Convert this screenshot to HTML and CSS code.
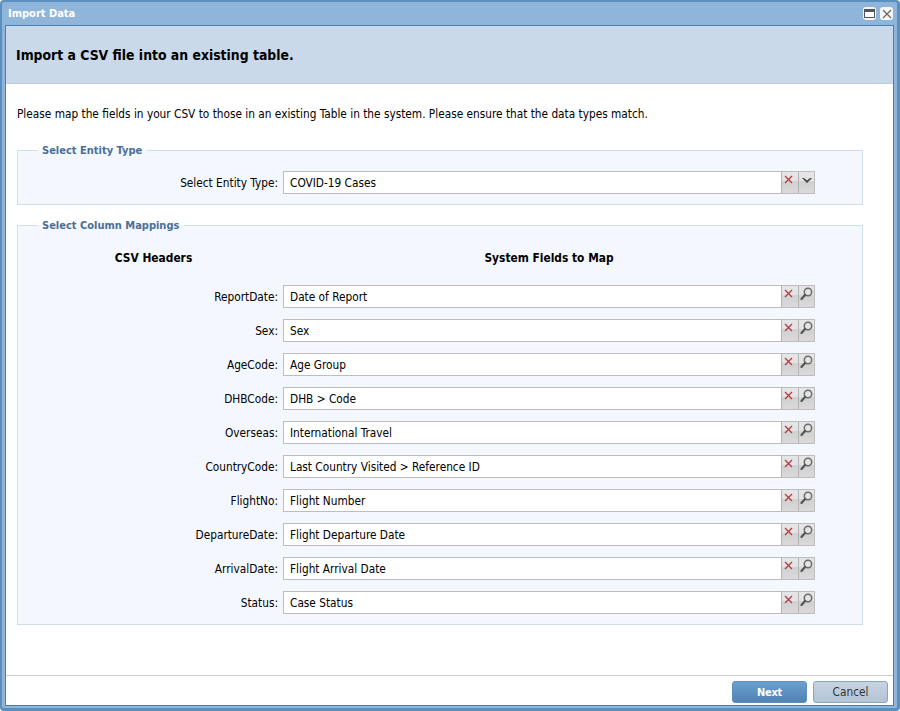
FILE: index.html
```html
<!DOCTYPE html>
<html lang="en">
<head>
<meta charset="utf-8">
<title>Import Data</title>
<link rel="stylesheet" href="styles.css">
</head>
<body>
<div class="window">
  <div class="titlebar">
    <span class="title">Import Data</span>
    <div class="tools">
      <button class="tool"><svg width="11" height="9" viewBox="0 0 11 9"><rect x="0.5" y="0.5" width="10" height="8" fill="#fff" stroke="#555"/><rect x="1" y="1" width="9" height="2" fill="#555"/></svg></button>
      <button class="tool"><svg width="10" height="10" viewBox="0 0 10 10"><path d="M1 1L9 9M9 1L1 9" stroke="#666" stroke-width="1.2" fill="none"/></svg></button>
    </div>
  </div>
  <div class="panel">
    <div class="banner">Import a CSV file into an existing table.</div>
    <div class="content">
      <p class="intro">Please map the fields in your CSV to those in an existing Table in the system. Please ensure that the data types match.</p>
      <fieldset class="group group-entity">
        <legend>Select Entity Type</legend>
        <div class="row">
          <label class="lbl">Select Entity Type:</label>
          <div class="combo">
            <div class="value">COVID-19 Cases</div>
            <span class="trig trig-clear"><svg width="9" height="9" viewBox="0 0 9 9"><path d="M1 1L8 8M8 1L1 8" stroke="#b93a40" stroke-width="1.3" fill="none"/></svg></span>
            <span class="trig trig-down"><svg width="10" height="7" viewBox="0 0 10 7"><path d="M0 1L5 6L10 1L8 1L5 3.5L2 1Z" fill="#444"/></svg></span>
          </div>
        </div>
      </fieldset>
      <fieldset class="group group-map">
        <legend>Select Column Mappings</legend>
        <div class="heads">
          <div class="head-a">CSV Headers</div>
          <div class="head-b">System Fields to Map</div>
        </div>
        <div class="rows" id="rows"></div>
      </fieldset>
    </div>
    <div class="footer">
      <button class="btn btn-next">Next</button>
      <button class="btn btn-cancel">Cancel</button>
    </div>
  </div>
</div>
<script src="app.js"></script>
</body>
</html>
```
FILE: app.js
```js
var data = [
  ["ReportDate:", "Date of Report"],
  ["Sex:", "Sex"],
  ["AgeCode:", "Age Group"],
  ["DHBCode:", "DHB > Code"],
  ["Overseas:", "International Travel"],
  ["CountryCode:", "Last Country Visited > Reference ID"],
  ["FlightNo:", "Flight Number"],
  ["DepartureDate:", "Flight Departure Date"],
  ["ArrivalDate:", "Flight Arrival Date"],
  ["Status:", "Case Status"]
];
var x = '<svg width="9" height="9" viewBox="0 0 9 9"><path d="M1 1L8 8M8 1L1 8" stroke="#b93a40" stroke-width="1.3" fill="none"/></svg>';
var s = '<svg width="13" height="14" viewBox="0 0 13 14"><circle cx="8" cy="5" r="3.7" fill="#e4e4e4" stroke="#6a6a6a" stroke-width="1.5"/><path d="M5 8L1.5 12" stroke="#555" stroke-width="2.2" stroke-linecap="round"/></svg>';
var root = document.getElementById("rows");
data.forEach(function (d) {
  var row = document.createElement("div");
  row.className = "row";
  var lbl = document.createElement("label");
  lbl.className = "lbl";
  lbl.textContent = d[0];
  var combo = document.createElement("div");
  combo.className = "combo";
  var val = document.createElement("div");
  val.className = "value";
  val.textContent = d[1];
  combo.appendChild(val);
  [[x, "trig trig-clear"], [s, "trig"]].forEach(function (ic) {
    var t = document.createElement("span");
    t.className = ic[1];
    t.innerHTML = ic[0];
    combo.appendChild(t);
  });
  row.appendChild(lbl);
  row.appendChild(combo);
  root.appendChild(row);
});
```
FILE: styles.css
```css
* { box-sizing: border-box; }
html, body { margin: 0; padding: 0; height: 100%; }
body { font-family: "DejaVu Sans", sans-serif; font-stretch: condensed; font-size: 11.75px; color: #000; background: #fff; overflow: hidden; }
.window { width: 900px; height: 711px; background: #8fb6da; border: solid #5b8fbf; border-width: 2px 3px 3px 2px; border-radius: 4px; padding: 0 3px 2px 3px; display: flex; flex-direction: column; }
.titlebar { height: 23px; flex: none; display: flex; align-items: center; justify-content: space-between; padding: 0 1px 0 3px; }
.title { color: #fff; font-weight: bold; font-size: 11px; }
.tools { display: flex; gap: 4px; }
.tool { width: 13px; height: 13px; padding: 0; border: 0; background: #f6f6f6; border-radius: 3px; display: flex; align-items: center; justify-content: center; }
.panel { flex: 1; display: flex; flex-direction: column; background: #fff; border: 1px solid #4a7fb0; min-height: 0; }
.banner { height: 58px; flex: none; background: #c9d9e9; border-bottom: 1px solid #bccfe0; padding: 1px 10px 0; display: flex; align-items: center; font-size: 13.85px; font-weight: bold; }
.content { flex: 1; padding: 0 30px 0 11px; }
.intro { margin: 23px 0 0; height: 16px; line-height: 14px; white-space: nowrap; }
.group { margin: 0; padding: 0; background: #f4f8fe; border: 1px solid #d1dfec; min-width: 0; }
.group legend { margin-left: 20px; padding: 0 5px 0 4px; color: #4a6f97; font-weight: bold; font-size: 11px; line-height: 13px; }
.group-entity { margin-top: 21px; height: 61px; }
.group-map { margin-top: 14px; height: 406px; }
.row { display: flex; align-items: center; height: 23px; }
.group-entity .row { margin-top: 14px; }
.lbl { width: 265px; text-align: right; padding-right: 5px; flex: none; }
.combo { width: 532px; height: 23px; display: flex; flex: none; }
.value { flex: 1; background: #fff; border: 1px solid #bdbdbd; border-right: 0; padding-left: 6px; line-height: 22px; white-space: nowrap; overflow: hidden; }
.trig { width: 17px; flex: none; display: flex; align-items: center; justify-content: center; padding-bottom: 6px; background: linear-gradient(#e6e6e6, #e2e2e2 42%, #d0d0d0 46%, #dadada); border: 1px solid #bdbdbd; border-left: 1px solid #b4b4b4; border-right: 0; }
.trig:last-child { border-right: 1px solid #bdbdbd; }
.trig-clear { padding-right: 3px; }
.trig-down { padding-bottom: 5px; }
.heads { display: flex; height: 20px; margin-top: 16px; font-weight: bold; font-size: 11.85px; line-height: 20px; }
.head-a { width: 271px; text-align: center; }
.head-b { width: 532px; text-align: center; margin-left: -6px; }
.rows { display: flex; flex-direction: column; gap: 11px; margin-top: 17px; }
.footer { height: 30px; flex: none; border-top: 1px solid #cfcfcf; display: flex; justify-content: flex-end; gap: 6px; padding: 5px 5px 0 0; }
.btn { width: 75px; height: 22px; border-radius: 3px; font-family: inherit; font-stretch: condensed; font-size: 11.75px; padding: 0; }
.btn-next { color: #fff; font-weight: bold; font-size: 11px; letter-spacing: -0.3px; background: linear-gradient(#6b9fcd, #4f83b4); border: 1px solid #5b8fbf; }
.btn-cancel { color: #333; background: linear-gradient(#c6d4e2, #b3c4d5); border: 1px solid #8aa5c0; }
```
